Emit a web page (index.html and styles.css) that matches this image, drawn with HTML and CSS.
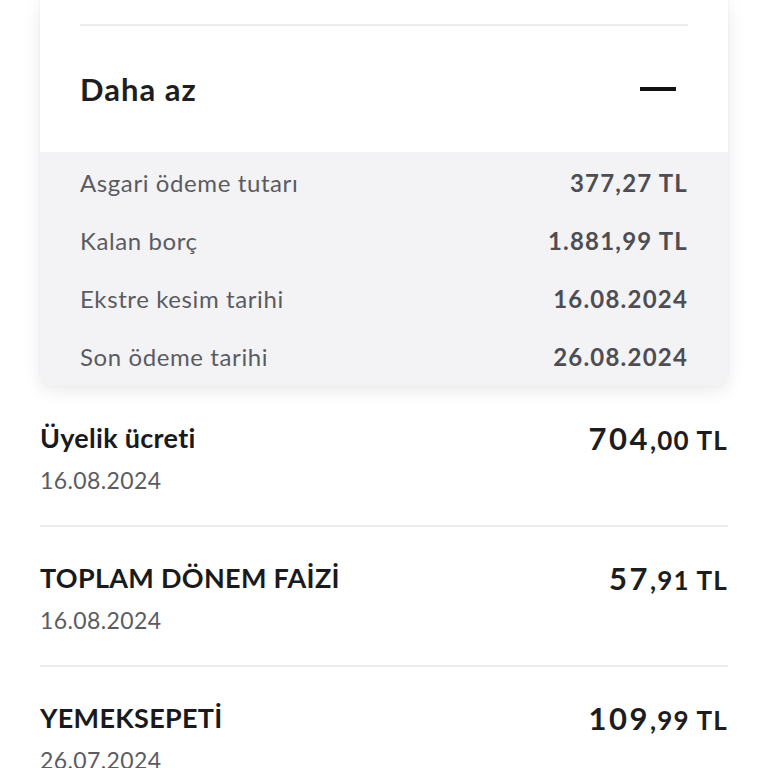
FILE: index.html
```html
<!DOCTYPE html>
<html lang="tr">
<head>
<meta charset="utf-8">
<title>Ekstre</title>
<link rel="stylesheet" href="styles.css">
</head>
<body>
<div class="card">
  <div class="card-top">
    <div class="divider"></div>
    <div class="toggle">
      <span class="toggle-label">Daha az</span>
      <span class="minus"></span>
    </div>
  </div>
  <div class="details">
    <div class="drow"><span class="dlabel">Asgari ödeme tutarı</span><span class="dvalue">377,27 TL</span></div>
    <div class="drow"><span class="dlabel">Kalan borç</span><span class="dvalue">1.881,99 TL</span></div>
    <div class="drow"><span class="dlabel">Ekstre kesim tarihi</span><span class="dvalue">16.08.2024</span></div>
    <div class="drow"><span class="dlabel">Son ödeme tarihi</span><span class="dvalue">26.08.2024</span></div>
  </div>
</div>
<div class="list">
  <div class="item">
    <div class="item-main">
      <div class="item-title">Üyelik ücreti</div>
      <div class="item-date">16.08.2024</div>
    </div>
    <div class="amount"><span class="int">704</span><span class="dec">,00 TL</span></div>
  </div>
  <div class="item">
    <div class="item-main">
      <div class="item-title">TOPLAM DÖNEM FAİZİ</div>
      <div class="item-date">16.08.2024</div>
    </div>
    <div class="amount"><span class="int">57</span><span class="dec">,91 TL</span></div>
  </div>
  <div class="item">
    <div class="item-main">
      <div class="item-title">YEMEKSEPETİ</div>
      <div class="item-date">26.07.2024</div>
    </div>
    <div class="amount"><span class="int">109</span><span class="dec">,99 TL</span></div>
  </div>
</div>
</body>
</html>
```

FILE: styles.css
```css
* { box-sizing: border-box; }
html, body { margin: 0; padding: 0; background: #ffffff; }
body {
  font-family: "Lato", "Noto Sans", sans-serif;
  color: #1c1c1f;
  width: 768px;
  height: 768px;
  overflow: hidden;
}
.card {
  margin: 0 40px;
  background: #ffffff;
  border-radius: 0 0 12px 12px;
  box-shadow: 0 4px 18px rgba(0, 0, 0, 0.09), 0 0 3px rgba(0,0,0,0.05);
  overflow: hidden;
}
.card-top { padding: 24px 40px 0; }
.divider { height: 2px; background: #ececef; }
.toggle {
  height: 126px;
  display: flex;
  align-items: center;
  justify-content: space-between;
}
.toggle-label {
  font-size: 31px;
  line-height: 40px;
  font-weight: 700;
  color: #1e1e21;
  letter-spacing: 1px;
}
.minus {
  width: 36px;
  height: 4px;
  background: #111;
  margin-right: 12px;
}
.details {
  background: #f3f3f6;
  padding: 2px 40px 0;
}
.drow {
  height: 58px;
  display: flex;
  align-items: center;
  justify-content: space-between;
}
.dlabel { font-size: 24px; line-height: 30px; color: #5b5b62; letter-spacing: 0.6px; }
.dvalue { font-size: 24px; line-height: 30px; font-weight: 700; color: #4d4d53; letter-spacing: 1.2px; }
.list { margin: 1px 40px 0; }
.item {
  display: flex;
  justify-content: space-between;
  align-items: flex-start;
  padding: 35px 0 31px;
  border-bottom: 2px solid #ececef;
}
.item-main { display: flex; flex-direction: column; gap: 12px; }
.item-title { font-size: 27px; line-height: 32px; font-weight: 700; color: #1a1a1d; letter-spacing: 0.3px; }
.item-date { font-size: 23px; line-height: 28px; color: #5b5b62; letter-spacing: 0.4px; }
.amount { line-height: 32px; color: #1d1d20; font-weight: 700; white-space: nowrap; }
.amount .int { font-size: 31px; letter-spacing: 2.5px; }
.amount .dec { font-size: 26px; letter-spacing: 1.2px; }
```
